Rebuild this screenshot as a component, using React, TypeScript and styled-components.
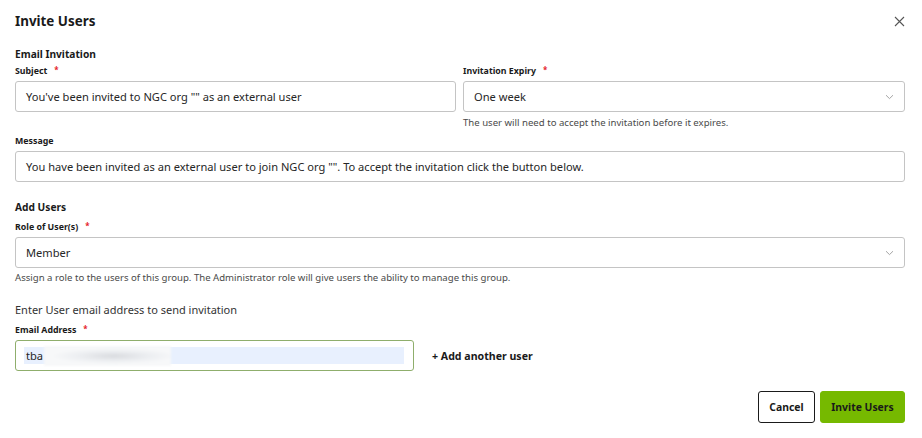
import React from "react";
import styled, { createGlobalStyle } from "styled-components";

const Global = createGlobalStyle`
  html, body { margin: 0; padding: 0; background: #fff; }
  body { font-family: "Noto Sans", "Liberation Sans", sans-serif; color: #1a1a1a; }
  * { box-sizing: border-box; }
`;

const Dialog = styled.div`
  width: 922px;
  height: 438px;
  padding: 0 17px 0 15px;
  display: flex;
  flex-direction: column;
`;

const Header = styled.div`
  height: 42px;
  display: flex;
  align-items: center;
  justify-content: space-between;
`;

const Title = styled.h1`
  margin: 0;
  font-size: 13.4px;
  font-weight: 700;
  line-height: 20px;
`;

const Close = styled.button`
  border: 0;
  background: none;
  padding: 0;
  width: 14px;
  height: 14px;
  margin-right: -1px;
  display: flex;
  align-items: center;
  justify-content: center;
  cursor: pointer;
`;

const SectionTitle = styled.h2<{ $mt: number }>`
  margin: ${(p) => p.$mt}px 0 0;
  font-size: 10.2px;
  font-weight: 700;
  line-height: 14px;
`;

const TwoCol = styled.div`
  margin-top: 3px;
  display: grid;
  grid-template-columns: 441px 442px;
  column-gap: 7px;
`;

const Field = styled.div<{ $mt?: number }>`
  display: flex;
  flex-direction: column;
  margin-top: ${(p) => p.$mt ?? 0}px;
`;

const Label = styled.label`
  font-size: 8.8px;
  font-weight: 700;
  line-height: 14px;
  margin-bottom: 3px;
  display: flex;
  gap: 7px;
`;

const Req = styled.span`
  color: #e5202a;
  font-size: 8px;
  line-height: 12px;
`;

const Box = styled.div<{ $active?: boolean }>`
  height: 31px;
  border: 1px solid ${(p) => (p.$active ? "#8fae6c" : "#c4c4c4")};
  border-radius: 3px;
  display: flex;
  align-items: center;
  padding: 0 10px 0 10px;
  font-size: 11.1px;
  color: #262626;
  background: #fff;
`;

const BoxText = styled.span`
  flex: 1;
  white-space: nowrap;
`;

const Helper = styled.div<{ $mt: number }>`
  margin-top: ${(p) => p.$mt}px;
  font-size: 9.6px;
  line-height: 12px;
  color: #4a4a4a;
  white-space: nowrap;
`;

const Intro = styled.div`
  margin-top: 19px;
  font-size: 11px;
  line-height: 14px;
  color: #333;
`;

const EmailRow = styled.div`
  display: flex;
  align-items: center;
  gap: 18px;
`;

const EmailBox = styled(Box)`
  width: 399px;
  padding: 0 9px 0 8px;
`;

const Autofill = styled.div`
  flex: 1;
  height: 17px;
  background: #e8f0fe;
  display: flex;
  align-items: center;
  padding-left: 2px;
  font-size: 11.1px;
`;

const Blurred = styled.span`
  width: 127px;
  height: 20px;
  margin-left: 1px;
  background: radial-gradient(ellipse 62px 8px at 55% 50%, #d9dbdf 0%, #edeff2 60%, #f7f8f9 100%);
  filter: blur(1px);
`;

const AddLink = styled.button`
  border: 0;
  background: none;
  padding: 0;
  font-family: inherit;
  font-size: 10.6px;
  font-weight: 700;
  color: #1a1a1a;
  cursor: pointer;
`;

const Footer = styled.div`
  margin-top: 20px;
  display: flex;
  justify-content: flex-end;
  gap: 5px;
`;

const Button = styled.button<{ $primary?: boolean }>`
  height: 32px;
  width: ${(p) => (p.$primary ? 85 : 57)}px;
  padding: 0;
  border-radius: 3px;
  border: 1px solid ${(p) => (p.$primary ? "#76b900" : "#1a1a1a")};
  background: ${(p) => (p.$primary ? "#76b900" : "#fff")};
  color: #1a1a1a;
  font-family: inherit;
  font-size: 10.4px;
  font-weight: 700;
  cursor: pointer;
`;

const Chevron = () => (
  <svg width="9" height="6" viewBox="0 0 9 6">
    <path d="M1 1.2 L4.5 4.6 L8 1.2" fill="none" stroke="#9a9a9a" strokeWidth="0.9" />
  </svg>
);

const Select = ({ value }: { value: string }) => (
  <Box>
    <BoxText>{value}</BoxText>
    <Chevron />
  </Box>
);

export default function App() {
  return (
    <>
      <Global />
      <Dialog>
        <Header>
          <Title>Invite Users</Title>
          <Close aria-label="Close">
            <svg width="11" height="11" viewBox="0 0 11 11">
              <path d="M1 1 L10 10 M10 1 L1 10" stroke="#555" strokeWidth="1.1" />
            </svg>
          </Close>
        </Header>

        <SectionTitle $mt={5}>Email Invitation</SectionTitle>
        <TwoCol>
          <Field>
            <Label>
              Subject <Req>*</Req>
            </Label>
            <Box>
              <BoxText>You've been invited to NGC org "" as an external user</BoxText>
            </Box>
          </Field>
          <Field>
            <Label>
              Invitation Expiry <Req>*</Req>
            </Label>
            <Select value="One week" />
            <Helper $mt={5}>The user will need to accept the invitation before it expires.</Helper>
          </Field>
        </TwoCol>

        <Field $mt={5}>
          <Label>Message</Label>
          <Box>
            <BoxText>
              You have been invited as an external user to join NGC org "". To accept the invitation click the button below.
            </BoxText>
          </Box>
        </Field>

        <SectionTitle $mt={18}>Add Users</SectionTitle>
        <Field $mt={6}>
          <Label>
            Role of User(s) <Req>*</Req>
          </Label>
          <Select value="Member" />
          <Helper $mt={4}>
            Assign a role to the users of this group. The Administrator role will give users the ability to manage this group.
          </Helper>
        </Field>

        <Intro>Enter User email address to send invitation</Intro>
        <Field $mt={6}>
          <Label>
            Email Address <Req>*</Req>
          </Label>
          <EmailRow>
            <EmailBox $active>
              <Autofill>
                tba
                <Blurred />
              </Autofill>
            </EmailBox>
            <AddLink>+ Add another user</AddLink>
          </EmailRow>
        </Field>

        <Footer>
          <Button>Cancel</Button>
          <Button $primary>Invite Users</Button>
        </Footer>
      </Dialog>
    </>
  );
}
